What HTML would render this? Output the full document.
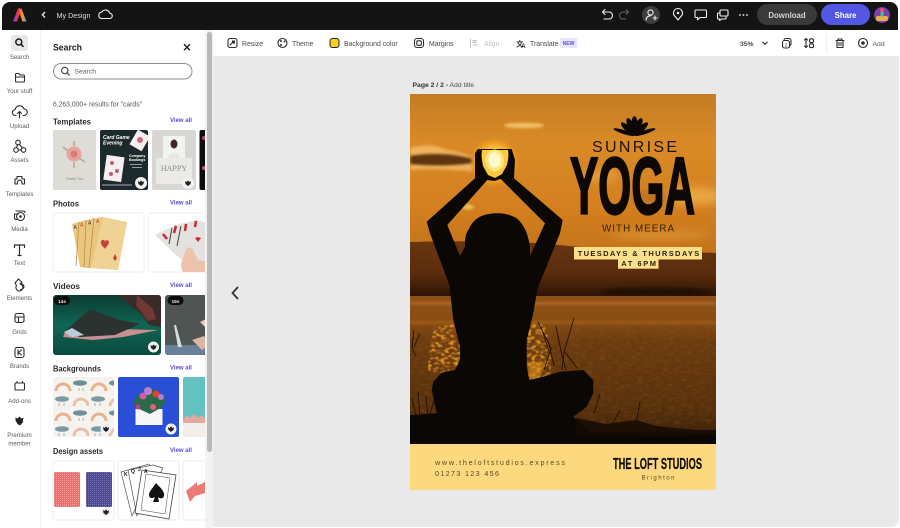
<!DOCTYPE html>
<html lang="en"><head><meta charset="utf-8"><title>My Design</title>
<style>
html,body{margin:0;padding:0;width:900px;height:528px;overflow:hidden;background:#fff}
svg{display:block}
text{font-family:"Liberation Sans",sans-serif}
.r{font-size:6.1px;fill:#5c5c5c;text-anchor:middle}
.h{font-size:8.6px;font-weight:700;fill:#2a2a2a}
.v{font-size:6.4px;font-weight:700;fill:#5a50d8}
.t{font-size:6.9px;fill:#4a4a4a}
.i{fill:none;stroke:#2c2c2c;stroke-width:1.1;stroke-linecap:round;stroke-linejoin:round}
.w{fill:none;stroke:#eee;stroke-width:1.1;stroke-linecap:round;stroke-linejoin:round}
</style></head><body>
<svg width="900" height="528" viewBox="0 0 900 528" xmlns="http://www.w3.org/2000/svg">
<defs>
<linearGradient id="logo" x1="0" x2="1"><stop offset="0" stop-color="#7a3cf0"/><stop offset=".4" stop-color="#f0363c"/><stop offset=".7" stop-color="#f8a020"/><stop offset="1" stop-color="#30a0f0"/></linearGradient>
<linearGradient id="sky" x1="0" y1="0" x2="0" y2="1"><stop offset="0" stop-color="#c47c24"/><stop offset=".3" stop-color="#d98a26"/><stop offset=".7" stop-color="#d48020"/><stop offset="1" stop-color="#c2731a"/></linearGradient>
<linearGradient id="sea" x1="0" y1="0" x2="0" y2="1"><stop offset="0" stop-color="#8f5016"/><stop offset=".15" stop-color="#8a4e14"/><stop offset=".3" stop-color="#6c3c10"/><stop offset=".75" stop-color="#56300d"/><stop offset="1" stop-color="#3a2009"/></linearGradient>
<linearGradient id="hill" x1="0" y1="0" x2="0" y2="1"><stop offset="0" stop-color="#683610"/><stop offset=".6" stop-color="#5a2c0c"/><stop offset="1" stop-color="#2a1306"/></linearGradient>
<radialGradient id="sun"><stop offset="0" stop-color="#fff6b0"/><stop offset=".45" stop-color="#ffd84a"/><stop offset=".75" stop-color="#f5a020" stop-opacity=".8"/><stop offset="1" stop-color="#e08a20" stop-opacity="0"/></radialGradient>
<linearGradient id="green" x1="0" y1="0" x2="0" y2="1"><stop offset="0" stop-color="#0c3a32"/><stop offset=".5" stop-color="#0f6654"/><stop offset="1" stop-color="#0a4a3e"/></linearGradient>
<filter id="b1" x="-20%" y="-60%" width="140%" height="220%"><feGaussianBlur stdDeviation="1.2"/></filter>
<filter id="b3" x="-30%" y="-100%" width="160%" height="300%"><feGaussianBlur stdDeviation="4"/></filter>
<filter id="sp" x="0" y="0" width="1" height="1" color-interpolation-filters="sRGB"><feTurbulence type="fractalNoise" baseFrequency=".16 .45" numOctaves="2" seed="4"/><feColorMatrix values="0 0 0 0 .6  0 0 0 0 .36  0 0 0 0 .1  3 0 0 0 -1.4"/><feGaussianBlur stdDeviation=".4"/></filter>
<filter id="gold" x="0" y="0" width="1" height="1" color-interpolation-filters="sRGB"><feTurbulence type="fractalNoise" baseFrequency=".22 .4" numOctaves="2" seed="9"/><feColorMatrix values="0 0 0 0 .9  0 0 0 0 .6  0 0 0 0 .15  6 0 0 0 -3"/><feGaussianBlur stdDeviation=".4"/></filter>
<clipPath id="panel"><rect x="41" y="30" width="164" height="498"/></clipPath>
<clipPath id="c2"><rect x="100" y="130" width="48" height="60" rx="2"/></clipPath>
<clipPath id="c3"><rect x="53" y="295" width="108" height="60" rx="3"/></clipPath>
<clipPath id="c4"><rect x="165" y="295" width="40" height="60" rx="3"/></clipPath>
<clipPath id="poster"><rect x="410" y="94" width="306" height="350"/></clipPath>
<clipPath id="g1"><path d="M428 372c-2-14 2-34 8-46l24-2v50z"/></clipPath>
<clipPath id="g2"><path d="M526 324h18c6 14 8 30 6 54l-22 4z"/></clipPath>
<pattern id="rain" width="36" height="30" patternUnits="userSpaceOnUse" x="53" y="377">
<rect width="36" height="30" fill="#f6f3ee"/>
<path d="M3 14a7 7 0 0 1 14 0" fill="none" stroke="#e9b18f" stroke-width="3"/>
<ellipse cx="27" cy="6" rx="7" ry="2.800" fill="#6d8f98"/>
<path d="M21 29a7 7 0 0 1 14 0" fill="none" stroke="#e9c0a8" stroke-width="3"/>
<ellipse cx="9" cy="22" rx="7" ry="2.800" fill="#7c9aa2"/>
<path d="M26 11v3M30 11v3M6 26v3M11 26v3" stroke="#98b0b6"/>
</pattern>
<pattern id="red" width="2" height="2" patternUnits="userSpaceOnUse"><rect width="2" height="2" fill="#ee6f70"/><rect width="1" height="1" fill="#f69a98"/></pattern>
<pattern id="blue" width="2" height="2" patternUnits="userSpaceOnUse"><rect width="2" height="2" fill="#4b4a92"/><rect width="1" height="1" fill="#7675b2"/></pattern>
</defs>

<!-- shell -->
<rect width="900" height="528" fill="#fff"/>
<rect x="213" y="56" width="686" height="471" fill="#e9e9e9"/>
<path d="M899 527h-8a8 8 0 0 0 8-8z" fill="#fff"/>
<path d="M2 30V10a8 8 0 0 1 8-8h880a8 8 0 0 1 8 8v20z" fill="#141414"/>
<rect x="40" y="30" width="1" height="498" fill="#f1f1f1"/>
<rect x="205" y="30" width="8" height="498" fill="#f3f3f3"/>
<rect x="207" y="32" width="5" height="420" rx="2.500" fill="#b9b9b9"/>

<!-- top bar left -->
<path d="M13 21.500L18 8.500h3.400L26.500 21.500h-4l-2.700-7.500-2.800 7.500z" fill="url(#logo)"/>
<path d="M45 12l-2.600 2.800L45 17.600" fill="none" stroke="#eee" stroke-width="1.300"/>
<text x="56.500" y="18" font-size="7.200" fill="#ddd">My Design</text>
<path class="w" d="M101 18.500h8.500a2.600 2.600 0 0 0 .3-5.200 4.400 4.400 0 0 0-8-1.200 3.300 3.300 0 0 0-.8 6.400z"/>

<!-- top bar right -->
<path class="w" d="M603 12h6a3.400 3.400 0 0 1 0 7h-5M605 9.500l-2.500 2.500 2.500 2.500"/>
<path d="M628 12h-5a3.400 3.400 0 0 0 0 7h3M626 9.500l2.500 2.500-2.500 2.500" fill="none" stroke="#666" stroke-width="1"/>
<circle cx="651" cy="15" r="9" fill="#3d3d3d"/>
<circle cx="650.500" cy="12.500" r="2.600" class="w"/><path class="w" d="M646 20c.4-3 2-4.200 4.500-4.200M653 18h4M655 16v4"/>
<path class="w" d="M678 8.500a4.500 4.500 0 0 1 2.800 8l-2.800 3.500-2.800-3.500a4.500 4.500 0 0 1 2.800-8z"/><circle cx="678" cy="13" r="1.300" fill="#eee"/>
<path class="w" d="M696 10h9.500a1 1 0 0 1 1 1v5.500a1 1 0 0 1-1 1H700l-2.500 2.300v-2.300H696a1 1 0 0 1-1-1V11a1 1 0 0 1 1-1z"/>
<path class="w" d="M720 13h-1.500a1 1 0 0 0-1 1v4a1 1 0 0 0 1 1h1v1.500l2-1.500h3.500a1 1 0 0 0 1-1v-1M721 10h6a1 1 0 0 1 1 1v4a1 1 0 0 1-1 1h-6a1 1 0 0 1-1-1v-4a1 1 0 0 1 1-1z"/>
<circle cx="740" cy="15" r=".9" fill="#eee"/><circle cx="743.500" cy="15" r=".9" fill="#eee"/><circle cx="747" cy="15" r=".9" fill="#eee"/>
<rect x="757" y="4" width="60" height="21" rx="10.500" fill="#3a3a3a"/>
<text x="787" y="18" font-size="7.800" font-weight="700" fill="#d4d4d4" text-anchor="middle">Download</text>
<rect x="821" y="4" width="49" height="21" rx="10.500" fill="#5258e4"/>
<text x="845.500" y="18" font-size="7.800" font-weight="700" fill="#fff" text-anchor="middle">Share</text>
<circle cx="882" cy="15" r="8" fill="#7d3fa8"/><rect x="876" y="16" width="12" height="5" rx="2" fill="#e9b04a"/><rect x="880.500" y="9.500" width="3" height="7" fill="#48c080"/><circle cx="882" cy="10" r="2" fill="#e84d8a"/>

<!-- rail -->
<rect x="11" y="35" width="17" height="16" rx="3" fill="#e8e8e8"/>
<circle cx="18.800" cy="42" r="3" fill="none" stroke="#1c1c1c" stroke-width="1.500"/><path d="M21 44.300l2.500 2.500" stroke="#1c1c1c" stroke-width="1.600"/>
<text class="r" x="19.500" y="59">Search</text>
<path class="i" d="M15.500 75.500v5.500a1 1 0 0 0 1 1h7a1 1 0 0 0 1-1v-5a1 1 0 0 0-1-1h-3.500l-1.200-1.500h-2.300a1 1 0 0 0-1 1zM15.500 77h9"/>
<text class="r" x="19.500" y="93">Your stuff</text>
<path class="i" d="M16 115.500h-.5a3 3 0 0 1-.3-6 4.500 4.500 0 0 1 8.800-.5 3 3 0 0 1 0 6.500H23M19.500 118v-6.500M17.500 113.500l2-2 2 2"/>
<text class="r" x="19.500" y="128">Upload</text>
<circle class="i" cx="18" cy="142.500" r="2.300"/><circle class="i" cx="16" cy="150" r="2.300"/><circle class="i" cx="23.500" cy="150" r="2.300"/><path class="i" d="M17.500 145l-1 2.700M19.500 144.500l3 3.500M18.300 150h3"/>
<text class="r" x="19.500" y="162">Assets</text>
<path class="i" d="M17 176.500h5v2.500h2.500v5H22v-1.500a2.300 2.300 0 0 0-4.600 0V184H15v-5h2z"/>
<text class="r" x="19.500" y="196">Templates</text>
<path class="i" d="M16 211h7.500a1.500 1.500 0 0 1 1.500 1.500M14.500 214v4a1.500 1.500 0 0 0 1.500 1.500h1"/><circle class="i" cx="20.500" cy="216.500" r="4"/><circle cx="20.500" cy="216.500" r="1.300" fill="#2c2c2c"/><path class="i" d="M14.500 214h4"/>
<text class="r" x="19.500" y="231">Media</text>
<path d="M14.500 248v-3h10v3M19.500 245v10.500M17.500 255.500h4" fill="none" stroke="#2c2c2c" stroke-width="1.200"/>
<text class="r" x="19.500" y="265">Text</text>
<path class="i" d="M18.500 279l3.500 3.500-2 1.500a3.500 3.500 0 1 1-3.500 1.500l-1.500-2.500zM20 284a3.200 3.200 0 0 1 4 2.500c0 1.700-1.500 3-3.500 3"/>
<text class="r" x="19.500" y="300">Elements</text>
<rect class="i" x="15" y="313.500" width="9" height="9" rx="2"/><path class="i" d="M15 317h9M18.500 317v5.500"/>
<text class="r" x="19.500" y="334">Grids</text>
<rect class="i" x="15" y="347.500" width="9" height="10" rx="2"/><path class="i" d="M18 350v5M21.500 350l-3 2.500 3 2.500"/>
<text class="r" x="19.500" y="368">Brands</text>
<path class="i" d="M16 383h7.500a1 1 0 0 1 1 1v5a1 1 0 0 1-1 1H16a1 1 0 0 1-1-1v-5a1 1 0 0 1 1-1zM17 383v-1.500M22.500 383v-1.500"/>
<text class="r" x="19.500" y="403">Add-ons</text>
<path d="M15.500 417.500l2 1 2-2 2 2 2-1-.8 4.500 1-.5-3.700 4-2.500-1.500-2-3.500z" fill="#222"/>
<text class="r" x="19.500" y="437">Premium</text>
<text class="r" x="19.500" y="445.500">member</text>

<!-- panel -->
<text x="53" y="50.500" font-size="9" font-weight="700" fill="#1d1d1d" textLength="29" lengthAdjust="spacingAndGlyphs">Search</text>
<path d="M184 44.200l6 6M190 44.200l-6 6" stroke="#1c1c1c" stroke-width="1.400"/>
<rect x="53.500" y="63.500" width="138.500" height="15.500" rx="7.750" fill="#fff" stroke="#8f8f8f"/>
<circle cx="64.800" cy="70.500" r="3.200" fill="none" stroke="#333" stroke-width="1"/><path d="M67.200 73l2.500 2.500" stroke="#333" stroke-width="1.100"/>
<text x="74.500" y="73.300" font-size="6.800" fill="#5e5e5e">Search</text>
<text x="53" y="106.300" font-size="6.900" fill="#555" textLength="89" lengthAdjust="spacingAndGlyphs">6,263,000+ results for "cards"</text>

<text class="h" x="53" y="124.500" textLength="38" lengthAdjust="spacingAndGlyphs">Templates</text><text class="v" x="170" y="122" textLength="22" lengthAdjust="spacingAndGlyphs">View all</text>
<text class="h" x="53" y="206.500" textLength="26" lengthAdjust="spacingAndGlyphs">Photos</text><text class="v" x="170" y="204.500" textLength="22" lengthAdjust="spacingAndGlyphs">View all</text>
<text class="h" x="53" y="289" textLength="27" lengthAdjust="spacingAndGlyphs">Videos</text><text class="v" x="170" y="287" textLength="22" lengthAdjust="spacingAndGlyphs">View all</text>
<text class="h" x="53" y="371.500" textLength="48" lengthAdjust="spacingAndGlyphs">Backgrounds</text><text class="v" x="170" y="369.500" textLength="22" lengthAdjust="spacingAndGlyphs">View all</text>
<text class="h" x="53" y="454" textLength="50" lengthAdjust="spacingAndGlyphs">Design assets</text><text class="v" x="170" y="452" textLength="22" lengthAdjust="spacingAndGlyphs">View all</text>

<g clip-path="url(#panel)">
<!-- templates -->
<rect x="53" y="130" width="43" height="60" rx="2" fill="#dddcd7"/>
<circle cx="74" cy="154" r="7.500" fill="#e8a49a"/><circle cx="74" cy="154" r="3.500" fill="#d67c74"/><path d="M63 147l5 4M85 162l-6-4M74 146v-5M74 162v6" stroke="#b5a98b" stroke-width="1.500"/>
<text x="74.500" y="180" font-size="3.800" fill="#8a8a80" text-anchor="middle">Thank You</text>
<rect x="100" y="130" width="48" height="60" rx="2" fill="#1c2a2c"/>
<g clip-path="url(#c2)">
<text x="103" y="139" font-size="5" font-weight="700" fill="#fff" font-style="italic">Card Game</text>
<text x="103" y="144.500" font-size="5" font-weight="700" fill="#fff" font-style="italic">Evening</text>
<rect x="133" y="132" width="14" height="17" fill="#f4eeee" transform="rotate(30 140 140)"/><circle cx="140" cy="140" r="3" fill="#c66a82"/>
<rect x="105" y="156" width="18" height="25" fill="#f4eeee" transform="rotate(8 114 168)"/><circle cx="112" cy="163" r="2" fill="#c65a7a"/><circle cx="117" cy="171" r="2" fill="#c65a7a"/><circle cx="111" cy="174" r="2" fill="#c65a7a"/>
<text x="129" y="157" font-size="3.600" font-weight="700" fill="#fff">Company</text><text x="129" y="161" font-size="3.600" font-weight="700" fill="#fff">Bookings</text>
<rect x="130" y="164" width="12" height="1" fill="#99a"/><rect x="132" y="167" width="10" height="1" fill="#99a"/>
<rect x="102" y="184" width="30" height="2" fill="#667"/>
<circle cx="141" cy="183" r="6" fill="#f0f0f0"/><path d="M138 181l1.500 1 1.500-1.500 1.500 1.500 1.500-1-.5 3-2.500 2-2.500-2z" fill="#222"/>
</g>
<rect x="152" y="130" width="44" height="60" rx="2" fill="#d8d7d4"/>
<rect x="163" y="136" width="22" height="22" fill="#f2f2f0"/><ellipse cx="174" cy="144" rx="3.500" ry="4.500" fill="#3c2a22"/><path d="M168 158c0-6 12-6 12 0z" fill="#e9e5e2"/>
<rect x="156" y="158" width="36" height="26" fill="#ebeae7"/>
<text x="174" y="171" font-size="8" fill="#8a8a8e" text-anchor="middle" style="font-family:'Liberation Serif',serif">HAPPY</text>
<circle cx="188" cy="183" r="6" fill="#f2f2f2"/><path d="M185 181l1.500 1 1.500-1.500 1.500 1.500 1.500-1-.5 3-2.500 2-2.500-2z" fill="#222"/>
<rect x="199.500" y="130" width="8" height="60" rx="2" fill="#0d0d0d"/><circle cx="204" cy="138" r="2" fill="#b8456e"/><circle cx="204" cy="168" r="2" fill="#c84d70"/>

<!-- photos -->
<rect x="53" y="213" width="91" height="59" rx="2" fill="#fff" stroke="#eee"/>
<path d="M72 224l14-4 16-3 25 5-9 48-30-2-8-1z" fill="#e9c77e"/><path d="M79 222l-3 44M86 220l-2 47M94 218l-5 50" stroke="#b98d45" stroke-width=".8" fill="none"/>
<path d="M103 218l24 4-9 48-27-2z" fill="#efd294"/>
<text x="73.500" y="229" font-size="5" fill="#333">A</text><text x="80" y="226.500" font-size="5" fill="#c3342c">A</text><text x="88" y="224.500" font-size="5" fill="#333">A</text><text x="96" y="223" font-size="5" fill="#c3342c">A</text>
<path d="M101 241c2-2 4-1 4 1 0-2 3-3 4 0 0 3-4 6-4 7-1-2-5-4-4-8z" fill="#c4403a"/>
<path d="M113 258l2-4 2 4-2 3z" fill="#c4403a"/>
<rect x="148" y="213" width="60" height="59" rx="2" fill="#fff" stroke="#eee"/>
<path d="M155 235l20-10 22-5 14 4v46h-14l-20-14z" fill="#e3e2de"/>
<path d="M163 234l4 5M176 226l-2 7M186 224l-1 7M196 221l-1 6" stroke="#c6283a" stroke-width="2.500"/>
<path d="M172 228l-3 16M181 226l-4 20" stroke="#444" stroke-width="1"/>
<path d="M195 238l3 4 3-4-3-1z" fill="#d3263c"/>
<path d="M183 272c-5-8 1-14 2-20 3-6 6-6 8-2l5 10 10 2v10z" fill="#eec3ae"/>

<!-- videos -->
<rect x="53" y="295" width="108" height="60" rx="3" fill="url(#green)"/>
<g clip-path="url(#c3)">
<path d="M118 295h43v32l-12-2-7-10z" fill="#3a2a28"/>
<path d="M117 329l-30-4-22 7-2 5 30 3 30-3 35-7z" fill="#c99094"/>
<path d="M65 331l25-22 30 11 20 4-25 11-35 2z" fill="#2b3230"/><path d="M64 332l8 5 12-2-12-7z" fill="#bcd"/>
<path d="M137 295l16 14 3 10-8 2-12-16z" fill="#6f3a34"/>
</g>
<rect x="54" y="296" width="16" height="9" rx="4.500" fill="#0c0c0c"/><text x="62" y="303" font-size="4.800" font-weight="700" fill="#eee" text-anchor="middle">14s</text>
<circle cx="153.500" cy="347" r="5.500" fill="#f0f0f0"/><path d="M150.500 345l1.500 1 1.500-1.500 1.500 1.500 1.500-1-.5 3-2.500 2-2.500-2z" fill="#222"/>
<rect x="165" y="295" width="44" height="60" rx="3" fill="#4e5552"/>
<g clip-path="url(#c4)">
<path d="M165 345h45v10h-45z" fill="#6a8098"/><path d="M176 325l6 22h-4l-4-22z" fill="#d8dde4"/><path d="M192 340l12-4 6 8-8 6z" fill="#dcb6a4"/><path d="M200 322l8-4v12z" fill="#ecc8b8"/>
</g>
<rect x="167.500" y="296" width="16" height="9" rx="4.500" fill="#0c0c0c"/><text x="175.500" y="303" font-size="4.800" font-weight="700" fill="#eee" text-anchor="middle">19s</text>

<!-- backgrounds -->
<rect x="53" y="377" width="61" height="60" rx="3" fill="url(#rain)"/>
<circle cx="106" cy="429" r="5.500" fill="#f0f0f0"/><path d="M103 427l1.500 1 1.500-1.500 1.500 1.500 1.500-1-.5 3-2.500 2-2.500-2z" fill="#222"/>
<rect x="118" y="377" width="61" height="60" rx="2" fill="#2a4fd6"/>
<rect x="135.500" y="409" width="27" height="16" fill="#f6f6f6"/>
<path d="M135 407c-3-8 3-14 8-12 2-8 14-8 18 0 4 0 6 8 1 12l-12 7z" fill="#2a6a48"/>
<circle cx="143" cy="396" r="3.500" fill="#d65ba0"/><circle cx="156" cy="394" r="3.500" fill="#e2402e"/><circle cx="148" cy="391" r="4" fill="#b57fd2"/><circle cx="138" cy="407" r="2.500" fill="#c83a80"/><circle cx="153" cy="407" r="3" fill="#e0608a"/><circle cx="161" cy="397" r="3" fill="#b57fd2"/>
<circle cx="171" cy="429" r="5.500" fill="#f0f0f0"/><path d="M168 427l1.500 1 1.500-1.500 1.500 1.500 1.500-1-.5 3-2.500 2-2.500-2z" fill="#222"/>
<rect x="183" y="377" width="30" height="60" rx="2" fill="#63c2c0"/>
<rect x="183" y="420" width="30" height="17" fill="#f3eeea"/><path d="M183 420l4-5 3 3 4-4 4 4 3-3 6 5v3h-24z" fill="#e3a8a0"/>

<!-- design assets -->
<rect x="53" y="461" width="61" height="59" rx="2" fill="#fff" stroke="#eee"/>
<rect x="54" y="472" width="26" height="35" rx="1.500" fill="url(#red)"/>
<rect x="86" y="472" width="26" height="35" rx="1.500" fill="url(#blue)"/>
<circle cx="106" cy="512" r="5" fill="#f2f2f2"/><path d="M103 510l1.500 1 1.500-1.500 1.500 1.500 1.500-1-.5 3-2.500 2-2.500-2z" fill="#222"/>
<rect x="118" y="461" width="61" height="59" rx="2" fill="#fff" stroke="#eee"/>
<path d="M121 472l28-8 3 8-20 44z" fill="#fff" stroke="#555" stroke-width=".7"/>
<path d="M128 470l25-5 10 3-26 48z" fill="#fff" stroke="#555" stroke-width=".7"/>
<path d="M142 470l34 5-7 44-34-6z" fill="#fff" stroke="#444" stroke-width=".8"/>
<path d="M146 474l24 4-5 36-24-4z" fill="none" stroke="#444" stroke-width=".5"/>
<path d="M156 483c5 5 9 9 8 13-1 3-4 3-6 1l1 5h-6l2-5c-3 2-6 1-6-2 0-4 4-7 7-12z" fill="#111"/>
<text x="124" y="476" font-size="5" font-weight="700" fill="#111">K</text><text x="131" y="473" font-size="5" font-weight="700" fill="#111">Q</text><text x="138" y="471" font-size="5" font-weight="700" fill="#111">J</text><text x="144" y="473" font-size="5" font-weight="700" fill="#111">A</text>
<rect x="183" y="461" width="30" height="59" rx="2" fill="#fff" stroke="#eee"/>
<path d="M186 491l11-9 0 4 12-6 0 12-14 4-5 6z" fill="#ee7a78"/>
</g>

<!-- toolbar -->
<rect x="228" y="38.500" width="9" height="9" rx="2" class="i"/><rect x="232" y="40.500" width="3" height="3" fill="#2c2c2c"/><path class="i" d="M230 45l2-2"/>
<text class="t" x="242" y="46">Resize</text>
<circle class="i" cx="282.500" cy="43" r="4.500"/><circle cx="281" cy="41" r="1" fill="#2c2c2c"/><circle cx="284.500" cy="41.500" r="1" fill="#2c2c2c"/><circle cx="281" cy="45" r="1" fill="#2c2c2c"/>
<text class="t" x="292" y="46">Theme</text>
<rect x="330" y="38.500" width="9" height="9" rx="2.500" fill="#f4d21c" stroke="#222" stroke-width="1"/>
<text class="t" x="344" y="46">Background color</text>
<rect class="i" x="414.500" y="38.500" width="9" height="9" rx="2.500"/><rect class="i" x="416.800" y="40.800" width="4.500" height="4.500" rx="1"/>
<text class="t" x="429" y="46">Margins</text>
<path d="M470.500 38.500v9M473 40.500h3v2h-3zM473 45h5" stroke="#bdbdbd" stroke-width=".9" fill="none"/>
<text x="484" y="46" font-size="6.900" fill="#c0c0c0">Align</text>
<text x="516" y="46.500" font-size="7.500" font-weight="700" fill="#2c2c2c" style="font-family:'Liberation Sans','Noto Sans CJK SC',sans-serif">文</text><text x="521" y="48" font-size="6.500" font-weight="700" fill="#2c2c2c">A</text>
<text class="t" x="530" y="46">Translate</text>
<rect x="560" y="38" width="17" height="10" rx="1" fill="#e5e6fb"/><text x="568.500" y="45.200" font-size="5" font-weight="700" fill="#5a50d8" text-anchor="middle">NEW</text>

<text x="740" y="46" font-weight="700" font-size="6.800" fill="#4a4a4a">35%</text>
<path d="M762.500 41.800l2.500 2.500 2.500-2.500" fill="none" stroke="#333" stroke-width="1.100"/>
<rect class="i" x="784" y="38.500" width="7" height="7.500" rx="2"/><rect class="i" x="782.500" y="40.500" width="7" height="7.500" rx="2" style="fill:#fff"/><text x="786" y="46.500" font-size="4.500" fill="#222" text-anchor="middle">2</text>
<path class="i" d="M806 38.500v9M804.500 40l1.500-1.500 1.500 1.500M804.500 46l1.500 1.500 1.500-1.500"/><rect class="i" x="809.500" y="38.800" width="4" height="3.800" rx="1.500"/><rect class="i" x="809.500" y="43.800" width="4" height="3.800" rx="1.500"/>
<rect x="826" y="34" width="1" height="18" fill="#eee"/>
<path class="i" d="M836 40.500h8M838 40.500v-1.500h4v1.500M837 40.500v7h6v-7M839 42.500v3M841 42.500v3"/>
<circle class="i" cx="863" cy="43" r="4.500"/><circle cx="863" cy="43" r="1.800" fill="#2c2c2c"/>
<text x="872.500" y="46" font-size="6.800" fill="#555">Add</text>

<!-- canvas -->
<text x="412.500" y="87" font-size="6.800" font-weight="700" fill="#333">Page 2 / 2 -</text>
<text x="449.500" y="87" font-size="6.800" fill="#4e4e4e">Add title</text>
<path d="M238 287l-5.500 6 5.500 6" fill="none" stroke="#333" stroke-width="1.800"/>

<!-- poster -->
<g clip-path="url(#poster)">
<rect x="410" y="94" width="306" height="160" fill="url(#sky)"/>
<!-- clouds -->
<ellipse cx="524" cy="125.500" rx="20" ry="2.600" fill="#f2c368" filter="url(#b1)"/>
<path d="M410 148c14-4 26-3 34 1 10 2 22 4 29 9v13c-20-1-44-3-63-1z" fill="#eeb25c" filter="url(#b1)"/>
<path d="M410 156c18-3 42-3 63 3v4c-20 3-45 3-63 1z" fill="#5f3411" filter="url(#b1)"/>
<ellipse cx="600" cy="176" rx="18" ry="6" fill="#e8a445" opacity=".7" filter="url(#b3)"/>
<ellipse cx="695" cy="196" rx="30" ry="9" fill="#ecae4a" opacity=".8" filter="url(#b3)"/>
<ellipse cx="650" cy="197" rx="22" ry="6" fill="#a9641a" opacity=".5" filter="url(#b3)"/>
<ellipse cx="660" cy="235" rx="50" ry="5" fill="#e39a3a" opacity=".6" filter="url(#b3)"/>
<ellipse cx="468" cy="207" rx="6" ry="2.500" fill="#f0bd60" filter="url(#b1)"/>
<circle cx="494.500" cy="162" r="26" fill="url(#sun)"/>
<!-- horizon hill -->
<path d="M410 242c40-1 70-1 100 0 40 1 60 5 110 8 40 2 70 2 96 3v44H410z" fill="url(#hill)"/>
<ellipse cx="655" cy="292" rx="55" ry="4" fill="#1e0e04" opacity=".85" filter="url(#b1)"/>
<!-- water -->
<rect x="410" y="296" width="306" height="148" fill="url(#sea)"/>
<rect x="410" y="302" width="306" height="3" fill="#b8702a" opacity=".75" filter="url(#b1)"/>
<rect x="410" y="321" width="306" height="3" fill="#a9641e" opacity=".75" filter="url(#b1)"/>
<rect x="410" y="324" width="306" height="100" filter="url(#sp)" opacity=".35"/>
<g clip-path="url(#g1)"><rect x="428" y="323" width="34" height="52" filter="url(#gold)"/></g>
<g clip-path="url(#g2)"><rect x="526" y="323" width="26" height="60" filter="url(#gold)"/></g>
<path d="M528 362h18l-6 15-12 4z" fill="#e0901e" opacity=".6" filter="url(#b1)"/>
<!-- silhouette -->
<path fill-rule="evenodd" fill="#0b0705" d="M478 149h33.700l3.300 11-1 18.300 48.700 41.700-2.700 13.300L538.300 286.700 537.300 290 533.300 313.300 526.700 340V366.700L529.300 380 543.300 376.700 560 371.700 583.300 370 593.300 380V393.300L586.700 406.700 573.300 416.700 590 431.700 716 433.300V444H410V415L436.700 413.300 431.700 390 433.300 381.700 441.700 372.700 455 370 460 360V346.700L453.300 320 450 290V286.700L430 233.300 426.700 221.700 475 178.300V153.300z
M487.300 180L447.300 225 460 256 465 246.700C465 238 465.500 234 468.300 230 471 224 475 219 480 216.700 486 214 492 213.300 498.300 213.300 506 213.500 512 215.500 516.700 218.300 521 222 525 228 526.700 233.300 529 240 530 245 530 250V256L545 223.300 500.700 179 494.300 181z"/>
<!-- reeds -->
<path d="M538 322l14 28M542 330l8 24M574 318l-10 34-2 18M556 326l6 30 4 14M548 340l6 26M565 352l12 16M550 352l-6 18M414 330l-2 18 4 8M420 333l-6 14M412 398l4 18M418 392l2 24M426 396l2 20M434 400l-4 14M600 394l-6 20M620 410l-8 14M640 402l-4 22M583 420l-6 10" stroke="#1a0d05" stroke-width=".8" fill="none"/>
<path d="M576 418l30 6 30-4 20 6 40 4 20 0v6H576z" fill="#150b05" opacity=".85"/>
<!-- sun on top -->
<path d="M482 150h26c1 6 0 10-1 15l-5 9-7 4-7-3-5-9c-1-6-2-10-1-16z" fill="#ffc840"/>
<ellipse cx="494.500" cy="160.500" rx="9.500" ry="11" fill="#ffe680"/>
<ellipse cx="494.500" cy="160" rx="6" ry="7.500" fill="#fff9cf"/>

<!-- lotus -->
<g fill="#0c0806">
<ellipse cx="634.500" cy="125.500" rx="3.400" ry="9.200"/>
<ellipse cx="634.500" cy="125.800" rx="3.200" ry="9" transform="rotate(-22 634.500 135.500)"/>
<ellipse cx="634.500" cy="125.800" rx="3.200" ry="9" transform="rotate(22 634.500 135.500)"/>
<ellipse cx="634.500" cy="126" rx="2.800" ry="9" transform="rotate(-46 634.500 135.500)"/>
<ellipse cx="634.500" cy="126" rx="2.800" ry="9" transform="rotate(46 634.500 135.500)"/>
<ellipse cx="634.500" cy="124.500" rx="2" ry="11" transform="rotate(-72 634.500 135.500)"/>
<ellipse cx="634.500" cy="124.500" rx="2" ry="11" transform="rotate(72 634.500 135.500)"/>
</g>
<!-- heading texts -->
<text x="592" y="152" font-size="16" fill="#20130a" textLength="85" lengthAdjust="spacing">SUNRISE</text>
<text x="570" y="213.500" font-size="81" font-weight="700" fill="#0d0806" stroke="#0d0806" stroke-width="2.200" textLength="125" lengthAdjust="spacingAndGlyphs">YOGA</text>
<text x="602" y="231.300" font-size="9.800" fill="#3a2008" textLength="72" lengthAdjust="spacing">WITH MEERA</text>
<rect x="574" y="247" width="128" height="12.500" fill="#fbe08c"/>
<rect x="618" y="259" width="40.500" height="9.700" fill="#fbe08c"/>
<text x="577.700" y="255.800" font-size="7.500" font-weight="700" fill="#2e1e0c" textLength="121.600" lengthAdjust="spacing">TUESDAYS &amp; THURSDAYS</text>
<text x="621.300" y="266.200" font-size="7.500" font-weight="700" fill="#2e1e0c" textLength="34.700" lengthAdjust="spacing">AT 6PM</text>
</g>
<rect x="410" y="444" width="306" height="46" fill="#fcd97e"/>
<text x="435" y="464.800" font-size="7.200" fill="#5a4a22" textLength="130" lengthAdjust="spacing">www.theloftstudios.express</text>
<text x="435" y="476" font-size="7.200" fill="#5a4a22" textLength="64" lengthAdjust="spacing">01273 123 456</text>
<text x="613" y="469" font-size="16" font-weight="700" fill="#15100a" stroke="#15100a" stroke-width=".3" textLength="89" lengthAdjust="spacingAndGlyphs">THE LOFT STUDIOS</text>
<text x="641.500" y="479.500" font-size="6" fill="#5a4a22" textLength="33" lengthAdjust="spacing">Brighton</text>
</svg>
</body></html>
